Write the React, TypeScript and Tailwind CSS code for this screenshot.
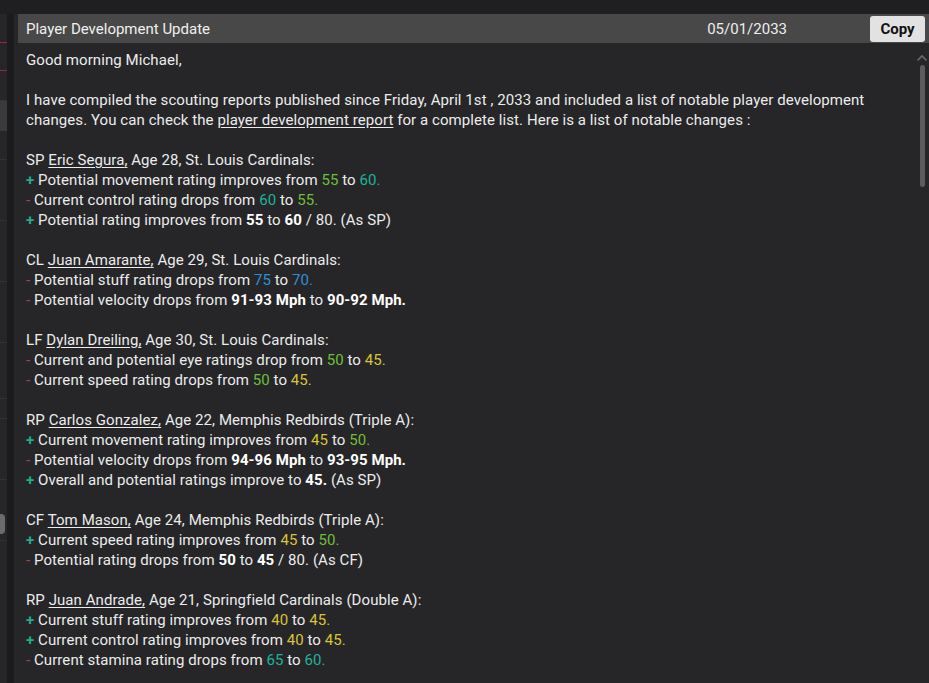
import React from 'react';

type Tone = 'green' | 'teal' | 'blue' | 'yellow';

const toneClass: Record<Tone, string> = {
	green: 'text-[#6cbf36]',
	teal: 'text-[#1fb39b]',
	blue: 'text-[#2f8fd6]',
	yellow: 'text-[#d8c33a]'
};

function N({ tone, children }: { tone: Tone; children: React.ReactNode }) {
	return <span className={toneClass[tone]}>{children}</span>;
}

function B({ children }: { children: React.ReactNode }) {
	return <span className="font-bold text-white">{children}</span>;
}

function Plus() {
	return <span className="font-bold text-[#1fae8a]">+ </span>;
}

function Minus() {
	return <span className="text-[#b0443f]">- </span>;
}

function Player({
	pos,
	name,
	rest
}: {
	pos: string;
	name: string;
	rest: string;
}) {
	return (
		<div>
			{pos} <span className="underline underline-offset-2">{name},</span> {rest}
		</div>
	);
}

function Sidebar() {
	const rows = [
		{ h: 28, cls: '' },
		{ h: 1, cls: 'bg-[#9b2b30]' },
		{ h: 27, cls: '' },
		{ h: 1, cls: 'bg-[#9b2b30]' },
		{ h: 29, cls: '' },
		{ h: 1, cls: 'bg-[#333335]' },
		{ h: 30, cls: 'bg-[#3a3a3c]' },
		{ h: 28, cls: '' },
		{ h: 1, cls: 'bg-[#333335]' },
		{ h: 60, cls: '' },
		{ h: 1, cls: 'bg-[#333335]' },
		{ h: 60, cls: '' },
		{ h: 1, cls: 'bg-[#333335]' },
		{ h: 60, cls: '' },
		{ h: 1, cls: 'bg-[#333335]' },
		{ h: 55, cls: '' },
		{ h: 1, cls: 'bg-[#333335]' },
		{ h: 19, cls: '' },
		{ h: 1, cls: 'bg-[#333335]' },
		{ h: 60, cls: '' },
		{ h: 1, cls: 'bg-[#333335]' },
		{ h: 60, cls: '' },
		{ h: 1, cls: 'bg-[#333335]' },
		{ h: 60, cls: '' }
	];
	return (
		<div className="flex w-[14px] shrink-0">
			<div className="relative flex w-[7px] flex-col bg-[#262628]">
				{rows.map((r, i) => (
					<div key={i} className={`${r.cls} shrink-0`} style={{ height: r.h }} />
				))}
				<div className="absolute left-0 top-[500px] h-[20px] w-[5px] rounded-r bg-[#6b6b6d]" />
			</div>
			<div className="w-[7px] bg-[#1b1b1d]" />
		</div>
	);
}

export default function App() {
	return (
		<div
			className="flex h-[683px] w-[929px] flex-col overflow-hidden bg-[#1e1e20] text-[15px] leading-[20px] tracking-[0.07px] text-[#ececec]"
			style={{ fontFamily: 'Roboto, "Noto Sans", sans-serif' }}
		>
			<div className="h-[14px] shrink-0 bg-[#1f1f21]" />
			<div className="flex min-h-0 flex-1">
				<Sidebar />
				<div className="relative flex min-w-0 flex-1 flex-col bg-[#262628]">
					<div className="ml-[4px] flex h-[29px] shrink-0 items-center bg-[#484849] pl-[8px] tracking-normal">
						<span className="text-[#f0f0f0]">Player Development Update</span>
						<span className="ml-auto mr-[83px] text-[#ededed]">05/01/2033</span>
						<button className="mr-[4px] h-[26px] w-[55px] rounded-[3px] bg-[#e2e2e2] font-bold text-[#111]">
							Copy
						</button>
					</div>

					<div className="pl-[12px] pr-[40px] pt-[7px]">
						<div>Good morning Michael,</div>
						<div className="h-[20px]" />
						<div className="whitespace-nowrap">
							I have compiled the scouting reports published since Friday, April 1st , 2033 and included a list of notable player development
							<br />
							changes. You can check the{' '}
							<span className="underline underline-offset-2">player development report</span> for a complete list. Here is a list of notable changes :
						</div>
						<div className="h-[20px]" />

						<Player pos="SP" name="Eric Segura" rest="Age 28, St. Louis Cardinals:" />
						<div>
							<Plus />Potential movement rating improves from <N tone="green">55</N> to <N tone="teal">60.</N>
						</div>
						<div>
							<Minus />Current control rating drops from <N tone="teal">60</N> to <N tone="green">55.</N>
						</div>
						<div>
							<Plus />Potential rating improves from <B>55</B> to <B>60</B> / 80. (As SP)
						</div>
						<div className="h-[20px]" />

						<Player pos="CL" name="Juan Amarante" rest="Age 29, St. Louis Cardinals:" />
						<div>
							<Minus />Potential stuff rating drops from <N tone="blue">75</N> to <N tone="blue">70.</N>
						</div>
						<div>
							<Minus />Potential velocity drops from <B>91-93 Mph</B> to <B>90-92 Mph.</B>
						</div>
						<div className="h-[20px]" />

						<Player pos="LF" name="Dylan Dreiling" rest="Age 30, St. Louis Cardinals:" />
						<div>
							<Minus />Current and potential eye ratings drop from <N tone="green">50</N> to <N tone="yellow">45.</N>
						</div>
						<div>
							<Minus />Current speed rating drops from <N tone="green">50</N> to <N tone="yellow">45.</N>
						</div>
						<div className="h-[20px]" />

						<Player pos="RP" name="Carlos Gonzalez" rest="Age 22, Memphis Redbirds (Triple A):" />
						<div>
							<Plus />Current movement rating improves from <N tone="yellow">45</N> to <N tone="green">50.</N>
						</div>
						<div>
							<Minus />Potential velocity drops from <B>94-96 Mph</B> to <B>93-95 Mph.</B>
						</div>
						<div>
							<Plus />Overall and potential ratings improve to <B>45.</B> (As SP)
						</div>
						<div className="h-[20px]" />

						<Player pos="CF" name="Tom Mason" rest="Age 24, Memphis Redbirds (Triple A):" />
						<div>
							<Plus />Current speed rating improves from <N tone="yellow">45</N> to <N tone="green">50.</N>
						</div>
						<div>
							<Minus />Potential rating drops from <B>50</B> to <B>45</B> / 80. (As CF)
						</div>
						<div className="h-[20px]" />

						<Player pos="RP" name="Juan Andrade" rest="Age 21, Springfield Cardinals (Double A):" />
						<div>
							<Plus />Current stuff rating improves from <N tone="yellow">40</N> to <N tone="yellow">45.</N>
						</div>
						<div>
							<Plus />Current control rating improves from <N tone="yellow">40</N> to <N tone="yellow">45.</N>
						</div>
						<div>
							<Minus />Current stamina rating drops from <N tone="teal">65</N> to <N tone="teal">60.</N>
						</div>
					</div>

					<div className="absolute right-[1px] top-[40px] flex w-[12px] flex-col items-center">
						<svg width="12" height="8" viewBox="0 0 12 8" className="mb-[3px]">
							<path d="M1.5 6.5 L6 2 L10.5 6.5" fill="none" stroke="#6a6a6c" strokeWidth="1.6" />
						</svg>
						<div className="h-[122px] w-[5px] rounded-full bg-[#5c5c5e]" />
					</div>
				</div>
			</div>
		</div>
	);
}
